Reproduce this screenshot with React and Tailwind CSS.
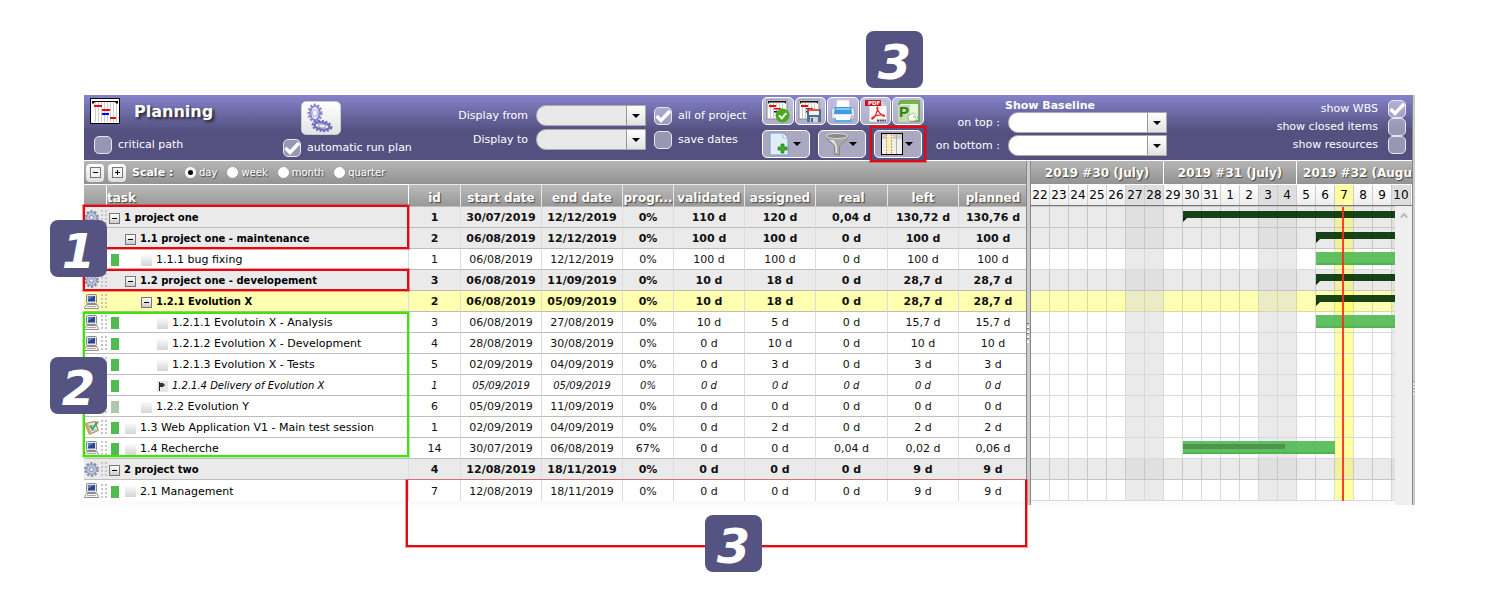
import React from "react";

const SHADOW = "[text-shadow:1px_1px_1px_#444]";

const COLUMNS = [
  ["id", "w-[52px]"],
  ["start date", "w-[81px]"],
  ["end date", "w-[81px]"],
  ["progr...", "w-[51px]"],
  ["validated", "w-[71px]"],
  ["assigned", "w-[71px]"],
  ["real", "w-[72px]"],
  ["left", "w-[71px]"],
  ["planned", "w-[68px]"],
];

const ROWS = [
  { icon: "gear", level: 0, type: "group", name: "1 project one", cells: ["1", "30/07/2019", "12/12/2019", "0%", "110 d", "120 d", "0,04 d", "130,72 d", "130,76 d"], bar: { kind: "group", start: 8, days: 40 } },
  { icon: "gear", level: 1, type: "group", name: "1.1 project one - maintenance", cells: ["2", "06/08/2019", "12/12/2019", "0%", "100 d", "100 d", "0 d", "100 d", "100 d"], bar: { kind: "group", start: 15, days: 40 } },
  { icon: "computer", level: 2, type: "leaf", status: "bg-[#50bb50]", name: "1.1.1 bug fixing", cells: ["1", "06/08/2019", "12/12/2019", "0%", "100 d", "100 d", "0 d", "100 d", "100 d"], bar: { kind: "task", start: 15, days: 40 } },
  { icon: "gear", level: 1, type: "group", name: "1.2 project one - developement", cells: ["3", "06/08/2019", "11/09/2019", "0%", "10 d", "18 d", "0 d", "28,7 d", "28,7 d"], bar: { kind: "group", start: 15, days: 40 } },
  { icon: "computer", level: 2, type: "selected", name: "1.2.1 Evolution X", cells: ["2", "06/08/2019", "05/09/2019", "0%", "10 d", "18 d", "0 d", "28,7 d", "28,7 d"], bar: { kind: "group", start: 15, days: 40 } },
  { icon: "computer", level: 3, type: "leaf", status: "bg-[#50bb50]", name: "1.2.1.1 Evolutoin X - Analysis", cells: ["3", "06/08/2019", "27/08/2019", "0%", "10 d", "5 d", "0 d", "15,7 d", "15,7 d"], bar: { kind: "task", start: 15, days: 21 } },
  { icon: "computer", level: 3, type: "leaf", status: "bg-[#50bb50]", name: "1.2.1.2 Evolution X - Development", cells: ["4", "28/08/2019", "30/08/2019", "0%", "0 d", "10 d", "0 d", "10 d", "10 d"] },
  { icon: "computer", level: 3, type: "leaf", status: "bg-[#50bb50]", name: "1.2.1.3 Evolution X - Tests", cells: ["5", "02/09/2019", "04/09/2019", "0%", "0 d", "3 d", "0 d", "3 d", "3 d"] },
  { icon: "computer", level: 3, type: "leaf", milestone: true, status: "bg-[#50bb50]", name: "1.2.1.4 Delivery of Evolution X", cells: ["1", "05/09/2019", "05/09/2019", "0%", "0 d", "0 d", "0 d", "0 d", "0 d"] },
  { icon: "computer", level: 2, type: "leaf", status: "bg-[#adc8ad]", name: "1.2.2 Evolution Y", cells: ["6", "05/09/2019", "11/09/2019", "0%", "0 d", "0 d", "0 d", "0 d", "0 d"] },
  { icon: "test", level: 1, type: "leaf", status: "bg-[#50bb50]", name: "1.3 Web Application V1 - Main test session", cells: ["1", "02/09/2019", "04/09/2019", "0%", "0 d", "2 d", "0 d", "2 d", "2 d"] },
  { icon: "computer", level: 1, type: "leaf", status: "bg-[#50bb50]", name: "1.4 Recherche", cells: ["14", "30/07/2019", "06/08/2019", "67%", "0 d", "0 d", "0,04 d", "0,02 d", "0,06 d"], bar: { kind: "task", start: 8, days: 8, progress: 67 } },
  { icon: "gear", level: 0, type: "group", name: "2 project two", cells: ["4", "12/08/2019", "18/11/2019", "0%", "0 d", "0 d", "0 d", "9 d", "9 d"] },
  { icon: "computer", level: 1, type: "leaf", status: "bg-[#50bb50]", name: "2.1 Management", cells: ["7", "12/08/2019", "18/11/2019", "0%", "0 d", "0 d", "0 d", "9 d", "9 d"] },
];

const DAYS = ["22", "23", "24", "25", "26", "27", "28", "29", "30", "31", "1", "2", "3", "4", "5", "6", "7", "8", "9", "10"];
const TODAY = 16;
const DAY_WIDTH = 19;
const isWeekend = (i) => i % 7 > 4;

const ROW_BG = { group: "bg-[#eaeaea]", selected: "bg-[#ffffb0]", leaf: "bg-white" };
const CELL = {
  group: { line: "border-[#c6c6c6]", day: "bg-[#eaeaea]", weekend: "bg-[#e0e0e0]", today: "bg-[#f2f09a]" },
  selected: { line: "border-[#dada98]", day: "bg-[#ffffb4]", weekend: "bg-[#ebebc8]", today: "bg-[#ffff78]" },
  leaf: { line: "border-[#d9d9d9]", day: "bg-white", weekend: "bg-[#eaeaea]", today: "bg-[#ffffa0]" },
};
const INDENT = ["w-0", "w-4", "w-8", "w-12"];

/* ---------- icons ---------- */

function PlanningIcon({ className }) {
  return (
    <svg className={className} viewBox="0 0 30 26" aria-hidden="true">
      <rect x="0.5" y="0.5" width="29" height="25" fill="#fff" stroke="#000" />
      <path d="M5.5 4v20M8.500 4v20M11.500 4v20M14.500 4v20M17.500 4v20M20.500 4v20M23.500 4v20M26.500 4v20" stroke="#ccc" />
      <path d="M2 5V3h26v2l-1 1-2-2H5L3 6z" fill="#000" />
      <path d="M4 7h8v2H4zM12 11h8v2h-8zM20 19h6v2h-6z" fill="#f00" />
      <path d="M12 15h7v2h-7z" fill="#00f" />
    </svg>
  );
}

function Gear({ cx, cy, rx, ry, color }) {
  return (
    <g fill="none" stroke={color}>
      <ellipse cx={cx} cy={cy} rx={rx} ry={ry} strokeWidth="3" strokeDasharray="2 1.5" />
      <ellipse cx={cx} cy={cy} rx={rx - 1.5} ry={ry - 1} strokeWidth="2" />
      <ellipse cx={cx} cy={cy} rx={rx * 0.4} ry={ry * 0.45} strokeWidth="1" opacity="0.7" />
    </g>
  );
}

function GearsIcon() {
  return (
    <svg className="h-[30px] w-8" viewBox="0 0 32 30" aria-hidden="true">
      <Gear cx={10} cy={10} rx={6} ry={8} color="#8a88d0" />
      <g transform="rotate(8 17 23)">
        <Gear cx={17} cy={23} rx={9} ry={4.5} color="#6f6cbc" />
      </g>
    </svg>
  );
}

function GearIcon() {
  return (
    <svg className="size-[15px]" viewBox="0 0 15 15" aria-hidden="true">
      <circle cx="7.5" cy="7.5" r="6.300" fill="none" stroke="#7d8aa8" strokeWidth="2" strokeDasharray="2.4 1.55" />
      <circle cx="7.5" cy="7.5" r="5" fill="#bcc5dc" stroke="#8791b0" strokeWidth="1" />
      <circle cx="7.5" cy="7.5" r="2" fill="#f4f5f9" stroke="#7c87a5" strokeWidth="1" />
    </svg>
  );
}

function ComputerIcon() {
  return (
    <svg className="size-[15px]" viewBox="0 0 15 15" aria-hidden="true">
      <rect x="2.5" y="0.5" width="10" height="9" rx="1" fill="#e4e2dc" stroke="#8a8a8a" />
      <rect x="4" y="2" width="7" height="5.500" fill="#27458f" />
      <path d="M4 2h6L4 6z" fill="#5f80c8" />
      <path d="M5 10h5v1.500H5z" fill="#999" />
      <path d="M2.500 10.500h10.500l1.500 3v1H.5v-1z" fill="#f4f2ee" stroke="#858585" strokeWidth="0.900" />
      <path d="M3 12.500h9" stroke="#aaa" />
    </svg>
  );
}

function TestIcon() {
  return (
    <svg className="size-[15px]" viewBox="0 0 15 15" aria-hidden="true">
      <path d="M1 3.500l10-2 3.200 9-8.700 3.700z" fill="#dcebf8" stroke="#a98a55" strokeWidth="1.200" />
      <path d="M1 3.500L4 3l3.500 10-2 1z" fill="#e0a566" />
      <path d="M6 6l5-1M7 11l5-1.500" stroke="#8db4dc" />
      <path d="M6 5.500l2.500 3.500L14 1.500" fill="none" stroke="#3fa535" strokeWidth="1.900" />
    </svg>
  );
}

const ROW_ICONS = { gear: GearIcon, computer: ComputerIcon, test: TestIcon };

function DragDots() {
  return (
    <svg className="h-[14px] w-[6px] shrink-0" viewBox="0 0 6 14" fill="#c6c6c6" aria-hidden="true">
      <path d="M0 0h2v2H0zM4 0h2v2H4zM0 4h2v2H0zM4 4h2v2H4zM0 8h2v2H0zM4 8h2v2H4zM0 12h2v2H0zM4 12h2v2H4z" />
    </svg>
  );
}

function MiniPlan() {
  return (
    <g>
      <rect x="1" y="1" width="20" height="19" fill="#fff" stroke="#888" />
      <path d="M4.5 4v15M7.500 4v15M10.500 4v15M13.500 4v15M16.500 4v15" stroke="#ccc" />
      <path d="M2 2h18v3l-1.500-1.500H3.500L2 5z" fill="#111" />
      <path d="M3 6h7v2H3zM8 9h7v1.500H8z" fill="#f00" />
      <path d="M8 12h5v1.500H8z" fill="#00f" />
    </g>
  );
}

function PlanCheckIcon() {
  return (
    <svg className="size-6" viewBox="0 0 24 24" aria-hidden="true">
      <MiniPlan />
      <circle cx="16.500" cy="16.500" r="7" fill="#47ab1c" />
      <path d="M13 16.500l2.800 2.700 4.500-5" fill="none" stroke="#fff" strokeWidth="2" />
    </svg>
  );
}

function PlanSaveIcon() {
  return (
    <svg className="size-6" viewBox="0 0 24 24" aria-hidden="true">
      <MiniPlan />
      <rect x="9" y="10" width="14" height="13" rx="1" fill="#4c6f96" />
      <rect x="11" y="10" width="10" height="6" fill="#f0f0f0" />
      <path d="M11 10h10v2H11z" fill="#e2553c" />
      <rect x="12" y="18" width="8" height="5" fill="#d5d5d5" />
      <rect x="13" y="19" width="2" height="4" fill="#44688f" />
    </svg>
  );
}

function PrinterIcon() {
  return (
    <svg className="size-6" viewBox="0 0 24 24" aria-hidden="true">
      <path d="M6 1h12l1 9H5z" fill="#fdfdfd" stroke="#ccc" strokeWidth="0.600" />
      <rect x="0.5" y="9" width="23" height="11" rx="2" fill="#e2e4ec" stroke="#a3a8b8" />
      <path d="M4 8h16l1 7H3z" fill="#3b9ce2" />
      <path d="M5 9h14v2H5z" fill="#85cbf5" />
      <path d="M3 16h18v2H3z" fill="#f7f7f7" />
      <path d="M4 19h16l1 4H3z" fill="#4fb0ee" />
      <path d="M5 18h14v3H5z" fill="#fff" />
      <circle cx="21" cy="17.500" r="0.800" fill="#e33" />
    </svg>
  );
}

function PdfIcon() {
  return (
    <svg className="size-6" viewBox="0 0 24 24" aria-hidden="true">
      <path d="M5 1h12l6 6v16H5z" fill="#fafafa" stroke="#b5b5b5" strokeWidth="0.800" />
      <path d="M17 1l6 6h-6z" fill="#cfcfcf" />
      <path d="M1 1h16v6H1z" fill="#c4161c" />
      <text x="4" y="6.200" fill="#fff" fontSize="5.500" fontWeight="bold" fontFamily="DejaVu Sans">PDF</text>
      <path d="M13.500 8c-1.500 1 .5 5 5 8.500 2 1.500 3.500 0 0-.5-4-.5-9 1-10.500 3-1 2 1.500 1 3-2 2-4 3.500-8 2.500-9z" fill="none" stroke="#e5252a" strokeWidth="1.300" />
      <path d="M13 21.500h9" stroke="#444" strokeWidth="1.800" strokeDasharray="2 .6" />
    </svg>
  );
}

function ProjectIcon() {
  return (
    <svg className="size-6" viewBox="0 0 24 24" aria-hidden="true">
      <path d="M5 2h18v20H3V5z" fill="#eaf4dc" stroke="#5c9b31" strokeWidth="1.500" />
      <path d="M5 2h18v3H4z" fill="#76b845" />
      <path d="M2 6h12v17H2z" fill="#c4dda6" />
      <text x="3" y="18" fill="#2f7d1c" fontSize="15" fontWeight="bold" fontFamily="Liberation Sans">P</text>
      <path d="M12 17l5-3 5 4-3 4h-6z" fill="#fff" stroke="#8ebb67" strokeWidth="0.800" />
      <path d="M17 17l3 2" fill="none" stroke="#76b845" />
    </svg>
  );
}

function AddPageIcon() {
  return (
    <svg className="h-6 w-5" viewBox="0 0 20 24" aria-hidden="true">
      <path d="M1 1h13l5 5v17H1z" fill="#e3edfa" stroke="#7f9cc8" />
      <path d="M14 1v5h5z" fill="#fff" stroke="#7f9cc8" strokeWidth="0.700" />
      <path d="M9 15h3v-3h3v3h3v3h-3v3h-3v-3H9z" fill="#3fae2a" stroke="#1d7d10" strokeWidth="0.700" />
    </svg>
  );
}

function FunnelIcon() {
  return (
    <svg className="h-6 w-6" viewBox="0 0 24 24" aria-hidden="true">
      <path d="M1 4c0 5 8 7 8.500 11v7l5 1v-8C15 11 23 9 23 4z" fill="#a8a8a8" stroke="#777" strokeWidth="0.700" />
      <path d="M4 8c3 2 6 4 6.500 7v6l1.500.3V15c0-3-3-5-3-7z" fill="#e4e4e4" />
      <ellipse cx="12" cy="4" rx="11" ry="2.500" fill="#8a8a8a" stroke="#ddd" />
    </svg>
  );
}

function ColumnsIcon() {
  return (
    <svg className="h-[22px] w-[22px]" viewBox="0 0 22 22" aria-hidden="true">
      <path d="M0 0h22v22H0z" fill="#000" />
      <path d="M1 1h20v20H1z" fill="#f0f0f0" />
      <path d="M1 1h20v5H1z" fill="#cfcfcf" />
      <path d="M15.500 1v20" stroke="#b0b0b0" />
      <path d="M5 1h7v20H5z" fill="#f7edd2" />
      <path d="M5.500 1v20M10.500 1v20" stroke="#d8a32a" strokeDasharray="2 1" />
    </svg>
  );
}

function Caret({ className = "" }) {
  return (
    <svg className={`h-1 w-2 ${className}`} viewBox="0 0 8 4" aria-hidden="true">
      <path d="M0 0h8L4 4z" fill="#000" />
    </svg>
  );
}

/* ---------- controls ---------- */

function CheckBox({ id, checked = false }) {
  return (
    <span className="grid size-[18px] shrink-0">
      <input
        id={id}
        type="checkbox"
        defaultChecked={checked}
        className="peer col-start-1 row-start-1 size-[18px] appearance-none rounded-[5px] border border-[#e6e6f2] bg-white/40"
      />
      <svg className="pointer-events-none invisible col-start-1 row-start-1 size-[18px] peer-checked:visible" viewBox="0 0 18 18" aria-hidden="true">
        <path d="M2.500 9l4.500 4.500L16 4" fill="none" stroke="#fff" strokeWidth="3.500" />
      </svg>
    </span>
  );
}

function Combo({ id, className, fieldClass }) {
  return (
    <span className={`grid h-[21px] ${className}`}>
      <select id={id} className={`col-start-1 row-start-1 h-full w-full appearance-none rounded-l-[10px] border border-[#aaa] ${fieldClass}`} />
      <span className="pointer-events-none col-start-1 row-start-1 my-px mr-px flex w-[19px] items-center justify-center justify-self-end border-l border-[#999] bg-linear-to-b from-white to-[#e2e2e2]">
        <Caret />
      </span>
    </span>
  );
}

function IconButton({ label, children }) {
  return (
    <button type="button" aria-label={label} className="flex h-7 w-8 items-center justify-center rounded-[5px] border border-white bg-white/50">
      {children}
    </button>
  );
}

function MenuButton({ label, children }) {
  return (
    <button type="button" aria-label={label} className="flex h-7 w-12 items-center justify-between rounded-[5px] border border-white bg-white/50 pr-2 pl-1.5">
      {children}
      <Caret />
    </button>
  );
}

function ScaleButton({ label, children }) {
  return (
    <button type="button" aria-label={label} className="flex h-[18px] w-[18px] items-center justify-center rounded-[4px] bg-linear-to-b from-white to-[#ddd]">
      <span className="flex size-[11px] items-center justify-center border border-[#777] bg-[#f2f2f2]">{children}</span>
    </button>
  );
}

function Sign({ plus }) {
  return (
    <svg className="size-[7px]" viewBox="0 0 7 7" aria-hidden="true">
      <path d={plus ? "M1 3h5v1H1zM3 1h1v5H3z" : "M1 3h5v1H1z"} fill="#000" />
    </svg>
  );
}

function Toolbar() {
  return (
    <header className="flex h-[65px] bg-linear-to-b from-[#8683cb] to-[#545181] to-55% text-[11px] leading-[18px] text-white">
      <div className="grid w-[340px] shrink-0 grid-cols-[190px_1fr] pl-1.5">
        <div className="flex flex-col gap-3 pt-[3px]">
          <div className="flex items-center gap-3.5">
            <PlanningIcon className="h-[26px] w-[30px]" />
            <h1 className="pt-0.5 text-[16px] font-bold [text-shadow:2px_2px_3px_#222]">Planning</h1>
          </div>
          <div className="flex items-center gap-1.5 pl-1">
            <CheckBox id="critical" />
            <label htmlFor="critical">critical path</label>
          </div>
        </div>
        <div className="flex flex-col gap-1 pt-1.5 pl-[3px]">
          <button type="button" aria-label="run plan" className="ml-[18px] flex h-[34px] w-10 items-center justify-center rounded-[5px] border border-[#ccc] bg-linear-to-b from-white to-[#e4e4e4]">
            <GearsIcon />
          </button>
          <div className="flex items-center gap-1.5">
            <CheckBox id="autorun" checked />
            <label htmlFor="autorun" className="whitespace-nowrap">automatic run plan</label>
          </div>
        </div>
      </div>

      <div className="grid w-[329px] shrink-0 grid-cols-[104px_110px_1fr] content-start items-center gap-x-2 gap-y-[3px] pt-2.5">
        <label htmlFor="from" className="text-right">Display from</label>
        <Combo id="from" className="w-full" fieldClass="bg-[#e9e9e9]" />
        <span className="flex items-center gap-1.5">
          <CheckBox id="all" checked />
          <label htmlFor="all" className="whitespace-nowrap">all of project</label>
        </span>
        <label htmlFor="to" className="text-right">Display to</label>
        <Combo id="to" className="w-full" fieldClass="bg-[#e9e9e9]" />
        <span className="flex items-center gap-1.5">
          <CheckBox id="dates" />
          <label htmlFor="dates">save dates</label>
        </span>
      </div>

      <div className="ml-[9px] flex w-[162px] shrink-0 flex-col gap-[5px] pt-0.5">
        <div className="flex gap-px">
          <IconButton label="validate planning"><PlanCheckIcon /></IconButton>
          <IconButton label="save baseline"><PlanSaveIcon /></IconButton>
          <IconButton label="print"><PrinterIcon /></IconButton>
          <IconButton label="export to pdf"><PdfIcon /></IconButton>
          <IconButton label="export to project"><ProjectIcon /></IconButton>
        </div>
        <div className="flex gap-2">
          <MenuButton label="create item"><AddPageIcon /></MenuButton>
          <MenuButton label="filter"><FunnelIcon /></MenuButton>
          <MenuButton label="columns"><ColumnsIcon /></MenuButton>
        </div>
      </div>

      <div className="grid w-[243px] shrink-0 grid-cols-[76px_159px] content-start items-center gap-x-2 gap-y-0.5">
        <h2 className="col-span-2 h-[15px] pt-0.5 pl-[81px] font-bold">Show Baseline</h2>
        <label htmlFor="top" className="text-right whitespace-nowrap">on top :</label>
        <Combo id="top" className="w-full" fieldClass="bg-white" />
        <label htmlFor="bottom" className="text-right whitespace-nowrap">on bottom :</label>
        <Combo id="bottom" className="w-full" fieldClass="bg-white" />
      </div>

      <div className="ml-auto grid grid-cols-[auto_18px] content-start items-center justify-items-end gap-x-2.5 pt-[5px] pr-1.5">
        <label htmlFor="wbs">show WBS</label>
        <CheckBox id="wbs" checked />
        <label htmlFor="closed">show closed items</label>
        <CheckBox id="closed" />
        <label htmlFor="resources">show resources</label>
        <CheckBox id="resources" />
      </div>
    </header>
  );
}

function ScaleBar() {
  return (
    <div className={`flex h-[23px] items-center bg-linear-to-b from-[#b6b6b6] to-[#929292] pl-[2px] text-white ${SHADOW}`}>
      <div className="flex gap-1">
        <ScaleButton label="collapse all"><Sign /></ScaleButton>
        <ScaleButton label="expand all"><Sign plus /></ScaleButton>
      </div>
      <span className="ml-1.5 w-[53px] text-[11px] leading-4 font-bold">Scale :</span>
      <div className="flex items-center gap-2.5 text-[10px] leading-4">
        {["day", "week", "month", "quarter"].map((s) => (
          <label key={s} className="flex items-center gap-[3px]">
            <input
              type="radio"
              name="scale"
              defaultChecked={s === "day"}
              className="size-[11px] appearance-none rounded-full border border-white bg-white checked:border-[3px] checked:bg-black"
            />
            {s}
          </label>
        ))}
      </div>
    </div>
  );
}

function TaskMark({ row }) {
  if (row.milestone)
    return (
      <svg className="size-[11px] shrink-0 bg-[#e6e6e6]" viewBox="0 0 11 11" aria-hidden="true">
        <path d="M2.500 1v9" stroke="#222" />
        <path d="M3 2h3l2 2-2 2H3z" fill="#333" />
      </svg>
    );
  if (row.type === "leaf") return <span className="size-[11px] shrink-0 bg-linear-to-b from-[#fafafa] to-[#d5d5d5]" />;
  return (
    <button type="button" aria-label={`collapse ${row.name}`} className="flex size-[11px] shrink-0 items-center justify-center border border-[#777] bg-linear-to-b from-white to-[#ccc]">
      <Sign />
    </button>
  );
}

function TaskTable() {
  return (
    <table className="w-[942px] table-fixed border-separate border-spacing-0 text-center text-[11px] leading-4">
      <thead>
        <tr className={`bg-linear-to-b from-[#bcbcbc] to-[#979797] text-[12px] text-white ${SHADOW}`}>
          <th className="h-[23px] w-[23px] border-t border-r border-b border-white border-b-[#bdbdbd] p-0" aria-label="type" />
          <th className="w-[302px] border-t border-r border-b border-white border-b-[#bdbdbd] p-0 pt-1 text-left">task</th>
          {COLUMNS.map(([name, width]) => (
            <th key={name} className={`${width} border-t border-r border-b border-[#e8e8e8] border-b-[#bdbdbd] p-0 pt-1 whitespace-nowrap last:border-r-0`}>{name}</th>
          ))}
        </tr>
      </thead>
      <tbody>
        {ROWS.map((row) => {
          const Icon = ROW_ICONS[row.icon];
          const font = row.type === "leaf" ? (row.milestone ? "text-[10px] italic" : "") : "font-bold";
          return (
            <tr key={row.name} className={`group ${ROW_BG[row.type]} ${font} text-[#111]`}>
              <td className="h-[21px] border-b border-[#bdbdbd] p-0 group-last:border-b-0">
                <div className="flex items-center gap-[2px]"><Icon /><DragDots /></div>
              </td>
              <td className="border-r border-b border-[#bdbdbd] border-r-[#ddd] p-0 pt-0.5 pl-0.5 text-black group-last:border-b-0">
                <div className="flex items-center whitespace-nowrap">
                  <span className={`${INDENT[row.level]} shrink-0`}>
                    {row.status && <span className={`ml-[2px] block h-3 w-2 ${row.status}`} />}
                  </span>
                  <TaskMark row={row} />
                  <span className={`ml-1 ${row.type === "leaf" ? "" : "text-[10px]"}`}>{row.name}</span>
                </div>
              </td>
              {row.cells.map((c, i) => (
                <td key={i} className="border-r border-b border-[#bdbdbd] border-r-[#ddd] p-0 pt-0.5 group-last:border-b-0 last:border-r-0">{c}</td>
              ))}
            </tr>
          );
        })}
      </tbody>
    </table>
  );
}

function GanttBar({ bar }) {
  const place = { left: bar.start * DAY_WIDTH, width: bar.days * DAY_WIDTH };
  if (bar.kind === "group")
    return (
      <div className="absolute top-1" style={place}>
        <div className="h-[7px] bg-[#003000]/90" />
        <div className="size-1 bg-[#003000] [clip-path:polygon(0_0,100%_0,0_100%)]" />
      </div>
    );
  return (
    <div className="absolute top-[3px] flex h-[13px] items-center border-b-2 border-[#50b450] bg-[#50b950]/90" style={place}>
      {bar.progress && <div className="h-[5px] bg-[#4b964b]" style={{ width: `${bar.progress}%` }} />}
    </div>
  );
}

function Gantt() {
  return (
    <section className="flex min-w-0 flex-1 flex-col overflow-hidden">
      <div className={`flex h-[24px] border-b border-white bg-linear-to-b from-[#b6b6b6] to-[#929292] text-[12px] leading-[24px] font-bold text-white ${SHADOW}`}>
        {["2019 #30 (July)", "2019 #31 (July)"].map((w) => (
          <div key={w} className="w-[133px] shrink-0 border-r border-white text-center whitespace-nowrap">{w}</div>
        ))}
        <div className="min-w-0 flex-1 text-right whitespace-nowrap">2019 #32 (Augu</div>
      </div>
      <div className="flex h-[21px] border-b border-[#777] text-[12px] leading-5 text-black">
        {DAYS.map((d, i) => (
          <div
            key={d}
            className={`w-[19px] shrink-0 border-r border-[#ccc] text-center ${i === TODAY ? "bg-[#ffffa0]" : isWeekend(i) ? "bg-[#dedede]" : "bg-linear-to-b from-white to-[#eee]"}`}
          >
            {d}
          </div>
        ))}
      </div>
      <div className="flex flex-1">
        <div className="min-w-0 flex-1 overflow-hidden border-t border-[#c6c6c6]">
          <div className="relative">
            {ROWS.map((row) => {
              const c = CELL[row.type];
              return (
                <div key={row.name} className="group relative flex h-[21px]">
                  {DAYS.map((d, i) => (
                    <div key={d} className={`w-[19px] shrink-0 border-r border-b group-last:border-b-0 ${c.line} ${i === TODAY ? c.today : isWeekend(i) ? c.weekend : c.day}`} />
                  ))}
                  {row.bar && <GanttBar bar={row.bar} />}
                </div>
              );
            })}
            <div className="absolute inset-y-0 left-[311px] w-0.5 bg-[#ff2a20]/90" />
          </div>
          <div className="h-1 bg-[#fafafa]" />
        </div>
        <div className="flex w-[17px] shrink-0 justify-center bg-[#efefef] pt-1.5">
          <svg className="h-[7px] w-2" viewBox="0 0 8 7" aria-hidden="true">
            <path d="M.8 5.500L4 2l3.200 3.500" fill="none" stroke="#bbb" strokeWidth="2" />
          </svg>
        </div>
      </div>
    </section>
  );
}

function Grip() {
  return (
    <svg className="h-5 w-[3px]" viewBox="0 0 3 20" aria-hidden="true">
      <path d="M0 0h2v1H0zM0 5h2v1H0zM0 10h2v1H0zM0 15h2v1H0z" fill="#777" />
      <path d="M0 3h2v2H0zM0 8h2v2H0zM0 13h2v2H0zM0 18h2v2H0z" fill="#fff" />
    </svg>
  );
}

/* ---------- annotations ---------- */

function Badge({ className, children }) {
  return (
    <div className={`absolute flex size-[57px] items-center justify-center rounded-lg bg-[#555381] pt-1 text-[48px] leading-none font-bold text-white italic ${className}`}>
      {children}
    </div>
  );
}

const RED = "border-[#e10a10] shadow-[0_0_0_1px_#e10a1066]";
const GREEN = "border-[#46e010] shadow-[0_0_0_1px_#46e01066]";

function Frame({ className }) {
  return <div className={`pointer-events-none absolute border-2 ${className}`} />;
}

export default function App() {
  return (
    <main className="relative min-h-screen bg-white pt-[95px] pr-[85px] pb-10 pl-[84px] font-['DejaVu_Sans',Verdana,sans-serif]">
      <div className="flex">
        <div className="min-w-0 flex-1">
          <Toolbar />
          <div className="flex border-t border-white">
            <div className="w-[942px] shrink-0">
              <ScaleBar />
              <TaskTable />
              <div className="h-1 bg-[#fafafa]" />
            </div>
            <div className="flex w-[5px] shrink-0 items-center border-r border-l border-[#888] bg-[#ccc]"><Grip /></div>
            <Gantt />
          </div>
        </div>
        <div className="flex w-[3px] shrink-0 items-center border-l border-[#888] bg-[#ccc] pt-44"><Grip /></div>
      </div>

      <Frame className={`top-[126px] left-[870px] h-9 w-14 ${RED}`} />
      <Frame className={`top-[205px] left-[83px] h-11 w-[326px] ${RED}`} />
      <Frame className={`top-[269px] left-[83px] h-[22px] w-[326px] ${RED}`} />
      <Frame className={`top-[312px] left-[83px] h-[145px] w-[326px] ${GREEN}`} />
      <Frame className={`top-[480px] left-[406px] h-[67px] w-[621px] border-t-0 ${RED}`} />

      <Badge className="top-[31px] left-[866px]">3</Badge>
      <Badge className="top-[220px] left-[50px]">1</Badge>
      <Badge className="top-[357px] left-[50px]">2</Badge>
      <Badge className="top-[515px] left-[705px]">3</Badge>
    </main>
  );
}
